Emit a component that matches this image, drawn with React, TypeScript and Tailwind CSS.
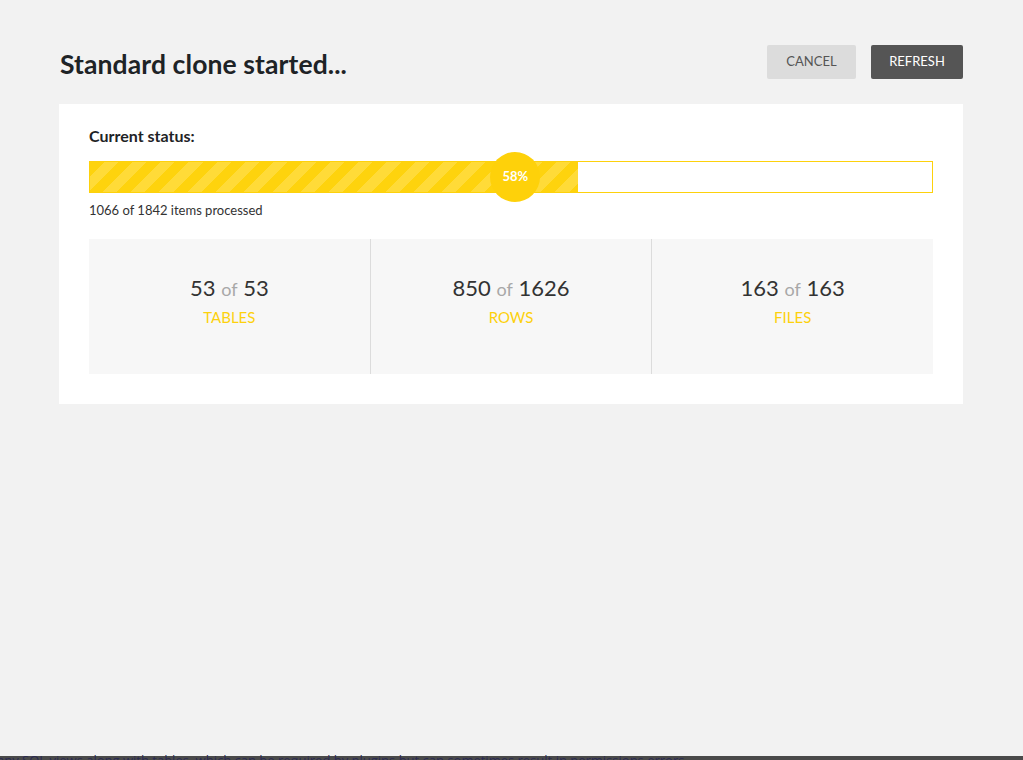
import React from "react";

const font = { fontFamily: "Lato, 'Open Sans', sans-serif" };

function Stat({ a, b, label, last }: { a: string; b: string; label: string; last?: boolean }) {
  return (
    <div className={`flex-1 flex flex-col items-center pt-[35px] ${last ? "" : "border-r border-[#dcdcdc]"}`}>
      <div className="text-[22px] leading-[28px] text-[#333]">
        {a} <span className="text-[18px] text-[#a8a8a8]">of</span> {b}
      </div>
      <div className="mt-[4px] text-[15px] leading-[20px] text-[#fdd10c]">{label}</div>
    </div>
  );
}

export default function App() {
  const pct = 58;
  return (
    <div className="h-[760px] w-full bg-[#f2f2f2] flex flex-col overflow-hidden" style={font}>
      <div className="flex-1 pl-[59px] pr-[60px] pt-[45px]">
        <div className="flex items-center justify-between h-[34px]">
          <h1 className="ml-px mt-[5px] text-[26.5px] font-bold text-[#1e2326] tracking-[0.1px]">Standard clone started...</h1>
          <div className="flex gap-[15px]">
            <button className="h-[34px] w-[89px] rounded-[2px] bg-[#dcdcdc] text-[13px] text-[#555]">CANCEL</button>
            <button className="h-[34px] w-[92px] rounded-[2px] bg-[#555555] text-[13px] text-white">REFRESH</button>
          </div>
        </div>
        <div className="mt-[25px] bg-white px-[30px] pt-[21px] pb-[30px]">
          <div className="text-[16px] font-bold text-[#1e2326] leading-[22px]">Current status:</div>
          <div className="relative mt-[14px] h-[32px] border border-[#fdd10c] bg-white">
            <div
              className="h-full bg-[repeating-linear-gradient(135deg,#fed30d_0px,#fed30d_10px,#ffdb38_10px,#ffdb38_20px)]"
              style={{ width: `${pct}%` }}
            />
            <div
              className="absolute top-1/2 -translate-y-1/2 h-[50px] w-[50px] rounded-full bg-[#fed10a] flex items-center justify-center text-white font-bold text-[13px]"
              style={{ left: `calc(${pct}% - 88px)` }}
            >
              {pct}%
            </div>
          </div>
          <div className="mt-[8px] text-[13px] text-[#333] leading-[18px]">1066 of 1842 items processed</div>
          <div className="mt-[20px] h-[135px] bg-[#f7f7f7] flex">
            <Stat a="53" b="53" label="TABLES" />
            <Stat a="850" b="1626" label="ROWS" />
            <Stat a="163" b="163" label="FILES" last />
          </div>
        </div>
      </div>
      <div className="relative h-[7px] overflow-hidden">
        <div className="absolute bottom-0 left-0 right-0 h-[4px] bg-[#4a4a4a]" />
        <div
          className="absolute left-[-3px] top-[-3px] whitespace-nowrap text-[13px] leading-[20px] text-[#2b2b52]"
          style={{ fontFamily: "'Open Sans', sans-serif" }}
        >
          any SQL views along with tables, which can be required by plugins but can sometimes result in permissions errors.
        </div>
      </div>
    </div>
  );
}
